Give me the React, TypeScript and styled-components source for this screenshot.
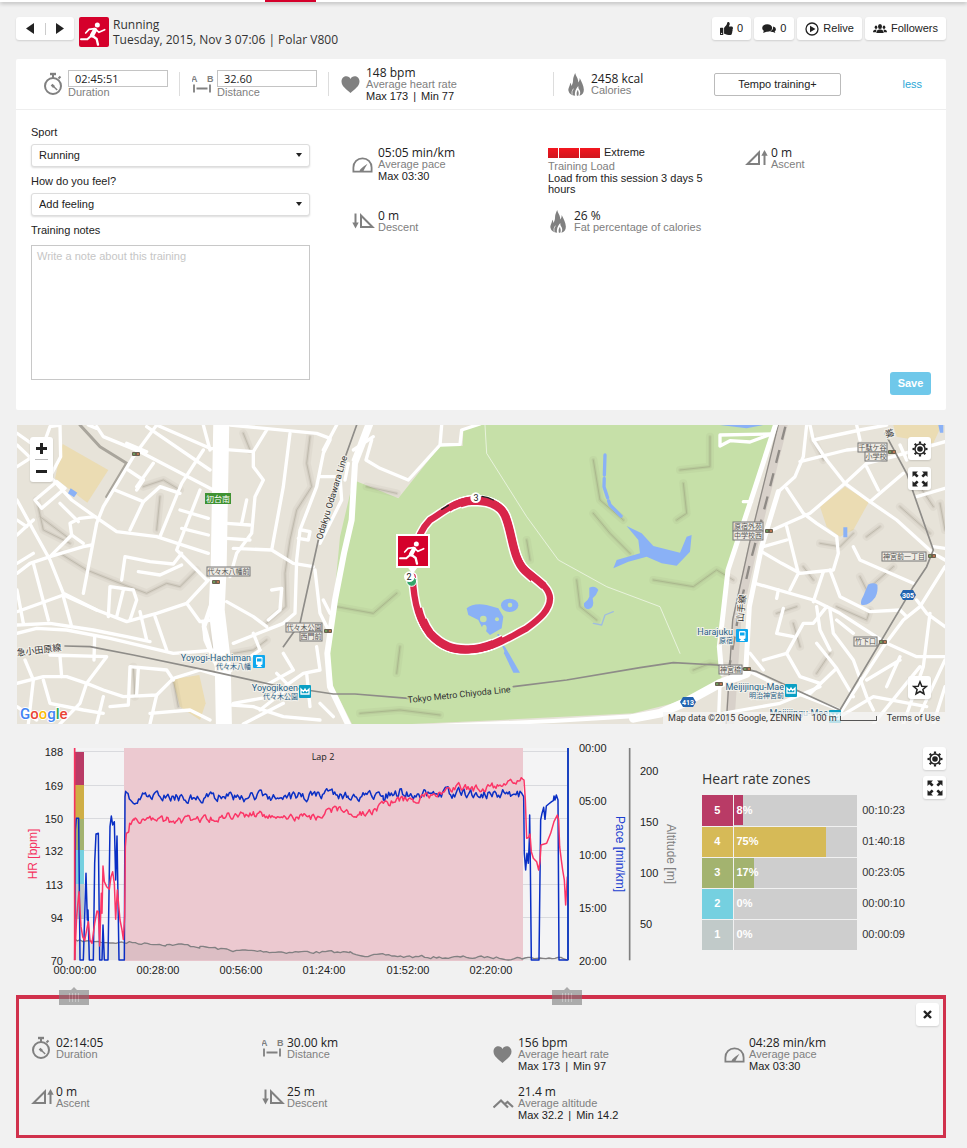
import React from "react";
import styled, { createGlobalStyle, css } from "styled-components";
import { FaThumbsUp } from "react-icons/fa";

const sans = `"Liberation Sans", Arial, sans-serif`;
const display = `"Open Sans", sans-serif`;
const mapFont = `Roboto, "Noto Sans CJK JP", sans-serif`;
const grey = "#808080";
const ink = "#222";
const pageBg = "#f1f1f1";

const GlobalStyle = createGlobalStyle`
  *, *::before, *::after { box-sizing: border-box; }
  body { margin: 0; background: ${pageBg}; color: ${ink}; font: 11px/13px ${sans}; }
  button, input, select, textarea { font: inherit; color: inherit; margin: 0; }
  button { cursor: pointer; }
`;

/* ---------- layout ---------- */

const TopBar = styled.div`
  height: 2px;
  background: #fff;
  box-shadow: 0 1px 4px rgba(0, 0, 0, 0.4);
  padding-left: 265px;
`;

const ActiveTab = styled.div`
  width: 51px;
  height: 2px;
  background: #d5002b;
`;

const Page = styled.main`
  padding: 15px 21px 10px 16px;
`;

const Header = styled.header`
  display: flex;
  align-items: flex-start;
  gap: 4px;
  margin-bottom: 12px;
`;

const whiteBox = css`
  border: 0;
  border-radius: 3px;
  background: #fff;
  box-shadow: 0 1px 2px rgba(0, 0, 0, 0.14);
`;

const NavPair = styled.nav`
  ${whiteBox}
  display: flex;
  align-items: center;
  height: 23px;
  width: 58px;
  margin-right: 1px;
`;

const NavButton = styled.button`
  flex: 1;
  height: 12px;
  padding: 0;
  border: 0;
  background: none;
  line-height: 0;
  & + & {
    border-left: 1px solid #ccc;
  }
`;

const Title = styled.h1`
  flex: 1;
  margin: 0;
  font: 400 12px/15px ${display};
  color: #333;
`;

const Actions = styled.div`
  display: flex;
  gap: 3px;
`;

const ActionButton = styled.button`
  ${whiteBox}
  display: flex;
  align-items: center;
  gap: 4px;
  height: 23px;
  padding: 0 8px;
`;

const IconButton = styled.button`
  ${whiteBox}
  display: grid;
  place-items: center;
  width: 23px;
  height: 23px;
  padding: 0;
`;

const Card = styled.section`
  background: #fff;
  border-radius: 2px;
  margin-bottom: 15px;
`;

const Summary = styled.div`
  display: grid;
  grid-template-columns: 163fr 149fr 225fr 137fr 256fr;
  height: 51px;
  border-bottom: 1px solid #eee;
`;

const SummaryCell = styled.div<{ $pad: number; $rule?: boolean }>`
  display: flex;
  align-items: center;
  padding-left: ${(p) => p.$pad}px;
  ${(p) =>
    p.$rule &&
    css`
      background: linear-gradient(#ddd, #ddd) 0 50% / 1px 24px no-repeat;
    `}
`;

const SummaryEnd = styled.div`
  display: flex;
  align-items: center;
  justify-content: space-between;
  padding: 0 24px;
`;

const SummaryInput = styled.input`
  display: block;
  width: 100px;
  height: 17px;
  padding: 0 6px;
  border: 1px solid #c4c4c4;
  background: #fff;
  font: 11px/13px ${display};
`;

const TargetButton = styled.button`
  width: 127px;
  height: 23px;
  border: 1px solid #bbb;
  border-radius: 2px;
  background: #fff;
`;

const LessLink = styled.a`
  color: #2aa7d6;
  text-decoration: none;
`;

const Details = styled.div`
  display: grid;
  grid-template-columns: 279fr 579fr;
  column-gap: 42px;
  padding: 15px 15px 0;
  min-height: 300px;
`;

const Form = styled.div`
  display: flex;
  flex-direction: column;
  padding-bottom: 30px;
`;

const FieldLabel = styled.label`
  line-height: 14px;
  margin-bottom: 5px;
`;

const SelectWrap = styled.div`
  position: relative;
  margin-bottom: 7px;
  &::after {
    content: "";
    position: absolute;
    right: 8px;
    top: 9px;
    border: 3px solid transparent;
    border-top: 4px solid #222;
    border-bottom: 0;
    pointer-events: none;
  }
`;

const Select = styled.select`
  appearance: none;
  display: block;
  width: 100%;
  height: 23px;
  padding: 0 7px;
  border: 1px solid #ddd;
  border-radius: 3px;
  background: #fff;
  box-shadow: 0 1px 2px rgba(0, 0, 0, 0.14);
`;

const Notes = styled.textarea`
  display: block;
  width: 100%;
  height: 135px;
  margin-top: 3px;
  padding: 4px 5px;
  border: 1px solid #c8c8c8;
  resize: none;
  &::placeholder {
    color: #c6c6c6;
    opacity: 1;
  }
`;

const MetricSide = styled.div`
  display: flex;
  flex-direction: column;
  justify-content: space-between;
  padding: 21px 0 15px;
`;

const IconSlot = styled.span`
  display: flex;
  flex: none;
  width: 25px;
`;

const MetricGrid = styled.div`
  display: grid;
  grid-template-columns: 196fr 197fr 186fr;
  grid-auto-rows: minmax(63px, auto);
  align-items: start;
  ${IconSlot} {
    width: 26px;
  }
`;

const MetricRow = styled.div`
  display: flex;
  align-items: center;
`;

const Value = styled.div`
  font: 12px/13px ${display};
`;

const Caption = styled.div`
  color: ${grey};
  line-height: 11px;
`;

const CaptionLabel = styled.label`
  display: block;
  color: ${grey};
  line-height: 11px;
`;

const Extra = styled.div`
  line-height: 13px;
`;

const Pipe = styled.span`
  padding: 0 5px;
`;

const Load = styled.div`
  max-width: 160px;
  line-height: 11px;
`;

const LoadLevel = styled.div`
  display: flex;
  align-items: center;
  height: 13px;
  margin-bottom: 2px;
  gap: 1px;
`;

const LoadBlock = styled.span<{ $half?: boolean }>`
  width: ${(p) => (p.$half ? 10 : 20)}px;
  height: 10px;
  background: linear-gradient(#f3161f, #cf161d);
`;

const LoadName = styled.span`
  margin-left: 3px;
`;

const LoadText = styled.div`
  margin-top: 1px;
`;

const SaveButton = styled.button`
  align-self: flex-end;
  width: 41px;
  height: 23px;
  padding: 0;
  border: 0;
  border-radius: 3px;
  background: #6fc8ea;
  color: #fff;
  font-weight: 700;
`;

const MapPanel = styled.section`
  position: relative;
  height: 299px;
  margin: 0 1px 14px;
  overflow: hidden;
`;

const MapSvg = styled.svg`
  display: block;
  width: 100%;
  height: 100%;
  text {
    font-family: ${mapFont};
  }
`;

const MapTools = styled.div<{ $side: "left" | "right" | "low" }>`
  position: absolute;
  display: flex;
  flex-direction: column;
  gap: 7px;
  ${(p) => p.$side === "left" && "left: 13px; top: 12px;"}
  ${(p) => p.$side === "right" && "right: 14px; top: 12px;"}
  ${(p) => p.$side === "low" && "right: 14px; bottom: 25px;"}
`;

const ZoomBox = styled.div`
  ${whiteBox}
  width: 23px;
  padding: 0 5px;
`;

const ZoomButton = styled.button`
  display: grid;
  place-items: center;
  width: 100%;
  height: 22px;
  padding: 0;
  border: 0;
  background: none;
  & + & {
    height: 23px;
    border-top: 1px solid #bbb;
  }
`;

const MapFooter = styled.div`
  position: absolute;
  right: 0;
  bottom: 0;
  display: flex;
  align-items: center;
  height: 12px;
  padding: 0 5px;
  gap: 10px;
  background: rgba(245, 245, 245, 0.75);
  font: 9px/12px ${mapFont};
  color: #333;
  white-space: nowrap;
  a {
    color: inherit;
    text-decoration: none;
  }
`;

const ScaleBar = styled.span`
  display: flex;
  align-items: center;
  gap: 3px;
  &::after {
    content: "";
    width: 37px;
    height: 5px;
    border: 1px solid #555;
    border-top: 0;
  }
`;

const ChartSection = styled.section`
  position: relative;
  z-index: 1;
  display: grid;
  grid-template-columns: minmax(0, 1fr) auto 24px;
  align-items: start;
`;

const ChartSvg = styled.svg`
  display: block;
  width: 100%;
  text {
    font: 11px ${sans};
    fill: ${ink};
  }
  text.axis {
    font-size: 12px;
  }
  text.hr {
    fill: #f5325f;
  }
  text.pace {
    fill: #1b3fd0;
  }
  text.altitude {
    fill: ${grey};
  }
  text.lap {
    font: 9px ${display};
  }
`;

const Zones = styled.div`
  padding: 33px 17px 0 12px;
`;

const ZoneTitle = styled.h2`
  margin: 0 0 8px;
  font: 400 14px/16px ${display};
  color: #333;
`;

const ZoneTable = styled.table`
  border-collapse: collapse;
  th,
  td {
    height: 31px;
    padding: 0;
    border-bottom: 1px solid ${pageBg};
  }
`;

const ZoneNumber = styled.th<{ $color: string }>`
  width: 31px;
  border-right: 1px solid ${pageBg};
  background: ${(p) => p.$color};
  color: #fff;
`;

const ZoneTrack = styled.td`
  width: 124px;
  background: #cecece;
`;

const ZoneFill = styled.div<{ $color: string }>`
  display: flex;
  align-items: center;
  height: 30px;
  padding-left: 3px;
  background: ${(p) => p.$color};
  color: #fff;
  font-weight: 700;
`;

const ZoneTime = styled.td`
  width: 48px;
  text-align: right;
  color: #333;
`;

const ChartTools = styled.div`
  display: flex;
  flex-direction: column;
  gap: 6px;
  padding: 9px 0 0 1px;
`;

const Selection = styled.section`
  position: relative;
  margin-top: -13px;
  padding: 37px 0 13px 12px;
  border: 3px solid #d0314c;
  border-top-width: 4px;
  display: grid;
  grid-template-columns: 231fr 231fr 231fr 219fr;
  grid-template-rows: 49px 37px;
  align-items: start;
`;

const CloseButton = styled(IconButton)`
  position: absolute;
  z-index: 2;
  right: 4px;
  top: 4px;
`;

/* ---------- icons ---------- */

const RunnerShape = () => (
  <g fill="none" stroke="#fff" strokeLinejoin="round" strokeLinecap="round">
    <circle cx="55" cy="24" r="7.5" fill="#fff" stroke="none" />
    <path d="M48 39L39 55" strokeWidth="13" />
    <path d="M50 37L60 46L77 38" strokeWidth="5" />
    <path d="M46 35L30 37L20 48" strokeWidth="5" />
    <path d="M41 57L53 66L57 83" strokeWidth="7" />
    <path d="M36 57L25 67L6 67" strokeWidth="6" />
  </g>
);

const SportIcon = () => (
  <svg width="30" height="30" viewBox="0 0 90 90" aria-label="Running">
    <rect width="90" height="90" rx="6" fill="#d5002b" />
    <RunnerShape />
  </svg>
);

const Stopwatch = () => (
  <svg width="20" height="24" viewBox="0 0 20 24" fill="none" stroke={grey} strokeWidth="2">
    <circle cx="10" cy="14" r="8" />
    <path d="M7 2H13" strokeWidth="2.4" />
    <path d="M10 2V6M15.5 6.5L17.5 4.5" />
    <path d="M9 13L14.2 18" strokeWidth="1.4" />
    <path d="M8.6 12.6L11 15" strokeWidth="2.6" />
  </svg>
);

const Distance = () => (
  <svg width="22" height="20" viewBox="0 0 22 20">
    <text x="-1" y="8" fontSize="9" fontWeight="700" fill={grey} fontFamily={sans}>
      A
    </text>
    <text x="15" y="8" fontSize="9" fontWeight="700" fill={grey} fontFamily={sans}>
      B
    </text>
    <path d="M2 10.500V18.500M18 10.500V18.500M4.500 14.500H15.500" stroke={grey} strokeWidth="1.8" />
  </svg>
);

const Heart = () => (
  <svg width="19" height="17" viewBox="0 0 19 17" fill={grey}>
    <path d="M9.500 17C6 13.500 0.500 10.500 0.500 5.500C0.500 2 3 0.300 5.300 0.300C7.300 0.300 8.800 1.400 9.500 3C10.200 1.400 11.700 0.300 13.700 0.300C16 0.300 18.500 2 18.500 5.500C18.500 10.500 13 13.500 9.500 17Z" />
  </svg>
);

const Flame = () => (
  <svg width="19" height="23" viewBox="-6 0 54 66" fill={grey}>
    <path d="M20 0C22 9 29 14 29 27C32 23 33 19 33 14C38 24 45 36 45 48C45 57 40 63 32 65C36 58 35 53 32 48C30 45 29 42 29 37C25 41 21 48 20 54C19 59 19 62 20 65C10 65 3 60 1 52C-1 44 5 38 6 28C8 30 9 33 9 37C13 32 14 26 14 20C14 12 18 6 20 0Z" />
    <path d="M25 65C23 58 25 52 28 48C29 54 32 58 29 65Z" />
    <path d="M12 62C9 56 12 50 15 45" fill="none" stroke="#fff" strokeWidth="2" />
  </svg>
);

const Gauge = () => (
  <svg width="21" height="16" viewBox="0 0 21 16" fill="none" stroke={grey} strokeWidth="1.8">
    <path d="M1.400 14.600V10.500C1.400 5 5.500 1.300 10.500 1.300S19.600 5 19.600 10.500V14.600Z" />
    <path d="M7.500 14.500C8 11.800 10.500 10.300 15.500 6.800C13 11 12 12.500 11.500 14.500Z" fill={grey} stroke="none" />
  </svg>
);

const Ascent = () => (
  <svg width="23" height="18" viewBox="0 0 23 18" fill="none" stroke={grey} strokeWidth="2" strokeMiterlimit="10">
    <path d="M2.500 15H14V3.500Z" />
    <path d="M19.500 16V5" />
    <path d="M16.300 6.800L19.500 1L22.700 6.800Z" fill={grey} stroke="none" />
  </svg>
);

const Descent = () => (
  <svg width="23" height="18" viewBox="0 0 23 18" fill="none" stroke={grey} strokeWidth="2" strokeMiterlimit="10">
    <path d="M9 3.500V15H20.500Z" />
    <path d="M3.500 1.500V12" />
    <path d="M0.300 10.500H6.700L3.500 16.500Z" fill={grey} stroke="none" />
  </svg>
);

const Mountain = () => (
  <svg width="21" height="11" viewBox="0 0 21 11" fill="none" stroke={grey} strokeWidth="2.200">
    <path d="M0.500 9.500L8 2.500L15 9.500M12 6L14.500 4L20 9" />
  </svg>
);

const Gear = () => (
  <svg width="16" height="16" viewBox="-8 -8 16 16" stroke={ink} fill="none">
    <circle r="5" strokeWidth="1.500" />
    <circle r="2.800" fill={ink} stroke="none" />
    {[0, 45, 90, 135, 180, 225, 270, 315].map((a) => (
      <path key={a} d="M0 -5.300V-7.500" strokeWidth="2.200" transform={`rotate(${a})`} />
    ))}
  </svg>
);

const Expand = () => (
  <svg width="16" height="16" viewBox="-8 -8 16 16" fill={ink}>
    {[0, 90, 180, 270].map((a) => (
      <path
        key={a}
        d="M2 -7.500H7.500V-2L5.800 -3.800L3.200 -1.400L1.400 -3.200L3.800 -5.800Z"
        transform={`rotate(${a})`}
      />
    ))}
  </svg>
);

const StarIcon = () => (
  <svg width="16" height="16" viewBox="0 0 16 16" fill="none" stroke={ink} strokeWidth="1.500">
    <path d="M8 1.800L9.800 6.200L14.300 6.500L10.900 9.500L12 14L8 11.500L4 14L5.100 9.500L1.700 6.500L6.200 6.200Z" />
  </svg>
);

const Comments = () => (
  <svg width="14" height="10" viewBox="0 0 14 10" fill={ink}>
    <ellipse cx="5.200" cy="4" rx="5" ry="3.800" />
    <path d="M2 6L1.200 9L5 7.500Z" />
    <path d="M11 2.500C14.500 3 14.500 6.500 12.700 7.300L13.300 9L11 8C9.800 8 8.600 7.700 8 7.200C10.500 6.500 11.400 4.800 11 2.500Z" />
  </svg>
);

const PlayRing = () => (
  <svg width="14" height="14" viewBox="0 0 14 14">
    <circle cx="7" cy="7" r="6" fill="none" stroke={ink} strokeWidth="1.300" />
    <path d="M5 3.800L10.500 7L5 10.200Z" fill={ink} />
  </svg>
);

const People = () => (
  <svg width="14" height="9" viewBox="0 0 14 9" fill={ink}>
    <ellipse cx="7" cy="2.500" rx="2" ry="2.500" />
    <path d="M3.300 9C3.300 6.500 4.500 6 6 5.500H8C9.500 6 10.700 6.500 10.700 9Z" />
    <ellipse cx="3" cy="3.300" rx="1.300" ry="1.800" />
    <ellipse cx="11" cy="3.300" rx="1.300" ry="1.800" />
    <path d="M0 8.300C0 6.300 1 5.800 3.500 5.500L2.800 8.300ZM14 8.300C14 6.300 13 5.800 10.500 5.500L11.200 8.300Z" />
  </svg>
);

const Triangle = ({ back }: { back?: boolean }) => (
  <svg width="8" height="11" viewBox="0 0 8 11" fill={ink}>
    <path d={back ? "M8 0V11L0 5.500Z" : "M0 0V11L8 5.500Z"} />
  </svg>
);

const Sign = ({ minus }: { minus?: boolean }) => (
  <svg width="11" height="11" viewBox="0 0 11 11" stroke={ink} strokeWidth="3">
    <path d={minus ? "M0 5.500H11" : "M0 5.500H11M5.500 0V11"} />
  </svg>
);

/* ---------- map ---------- */

const westRoads = [
  "M51 75L150 170L215 240L285 290L350 335L470 350L625 400",
  "M150 170L182 110L180 15M51 140L90 115M130 75L150 20L180 15M51 40L150 110",
  "M290 20L310 50L420 95L640 210M440 20L630 150M380 70L440 95M265 15L290 25",
  "M470 15L400 110L310 260L290 310L250 520M470 15L630 85L760 95",
  "M51 240L100 330L150 420L190 520L290 570L380 605L470 580L560 550L625 480",
  "M51 345L100 300M51 300L80 320M51 430L100 400M51 460L90 430L150 410L215 345",
  "M150 410L250 380L275 375M215 345L210 310L240 295L285 290M215 345L250 370",
  "M51 575L190 525L290 570M51 640L110 625L200 630L330 655L520 700L650 690",
  "M51 615L150 610L280 630L380 650L450 665M100 430L145 600M51 510L70 610",
  "M610 15L630 90M610 90L545 190L480 350M600 210L530 390L620 480",
  "M540 270L625 295M545 325L625 345M345 210L430 245L480 200L540 220",
  "M430 245L390 330M385 150L430 180L410 210M460 130L410 200",
  "M365 480L375 410L450 425L520 432L545 400M415 455L480 465L545 435",
  "M325 590L330 500L400 510L410 540L390 600M370 510L350 590M190 530L215 620",
  "M105 240L125 265L195 205L170 185L105 240M180 250L235 305M420 575L440 660M465 590L500 690",
  "M560 550L600 605L635 600M610 610L615 660L650 740",
  "M51 790L130 770L200 770L260 790L310 810L370 830L470 825L520 775L600 750L650 765",
  "M75 720L100 780L85 912M180 710L185 770M150 705L320 710L260 790L240 850L180 912",
  "M130 780L150 850L250 870L310 880M310 830L290 912M390 740L385 855L330 860M390 740L500 750L520 780",
  "M415 745L410 825M470 825L450 912M450 880L570 870L630 900M51 860L110 900M284 650L282 720",
  "M690 15L950 40L990 55M800 30L760 95L760 140L790 180L765 230L755 340L710 400L690 470",
  "M870 40L850 200L815 390M700 385L815 390L880 430L940 440M680 310L750 315M740 240L725 310M680 355L750 360",
  "M990 60L970 100L950 200L900 330L890 420L885 580L850 610L700 670M680 545L760 590L800 620M760 640L780 690",
  "M815 510L845 505L840 570L805 600M680 760L780 690M850 700L880 750L790 800M950 680L960 750L910 760L810 830L700 850",
  "M695 855L760 860L850 890L960 900M830 760L870 800L780 870M920 760L930 860M945 450L960 580L990 640M905 330L930 335L925 360L895 355",
  "M1010 15L970 90M960 170L1020 170L1025 240L960 370M970 540L990 580M960 850L1000 890M1100 15L1060 120M730 912L850 850",
];

const parkRoads = [
  "M155 60L138 120L180 145L265 180L360 75L420 73L425 30L480 12M360 75L365 15",
  "M100 90L160 50M75 180L85 130",
];

const eastRoads = [
  "M240 78L240 45L395 42M240 78L270 62L330 66L395 42M310 245L335 245",
  "M500 15L490 110L465 170L415 215M510 15L520 60L560 120L615 190L690 245L770 300L880 400",
  "M385 335L510 280L615 190L680 130L760 110L915 65M480 125L620 90L720 80M520 60L660 30L740 15M650 15L660 60",
  "M680 140L715 210M690 245L790 160M830 230L915 205M780 75L800 120",
  "M440 205L490 280L530 310L590 350L595 400L580 450L480 460L425 430L365 395M440 320L475 460L450 510M370 380L440 360",
  "M345 490L520 540L600 580L740 670L830 710L915 710M570 450L600 530L690 575L780 570L800 590M550 455L520 545",
  "M640 380L660 420L820 490M880 380L915 385M880 400L915 420M915 440L840 560L790 600L730 680L600 880",
  "M830 540L860 580L915 620M560 560L520 610L490 610L440 700L480 770L540 790M415 510L410 535",
  "M430 565L410 640L460 650M570 570L580 640L640 720L680 830L700 870M590 600L640 640M440 700L370 720M530 670L590 745L500 830M590 745L640 830",
  "M530 560L540 630L570 690M330 700L370 750M320 750L420 800L600 870M240 790L235 912M250 880L420 850L540 800",
  "M870 580L850 740L790 912M780 710L740 800M915 720L850 860L830 912M840 740L700 912M915 800L880 912M680 780L780 720M600 890L700 830L860 860",
];

const relief = [
  "M180 400L260 450L360 490L440 520L500 490L540 500L590 450",
  "M930 50L920 130L935 200L890 270L870 360L855 460L858 560L800 610",
  "M430 200L490 180L540 210M480 230L470 330M120 290L200 350M110 240L130 330L210 370",
  "M730 40L750 90M640 610L640 700M700 700L760 690L800 660M400 740L405 830M520 780L535 860",
  "M1100 200L1190 220M1010 560L1120 580L1190 520M1200 680L1190 760M1080 880L1200 870L1320 885",
  "M1780 120L1800 240L1870 300M1780 280L1830 340L1890 400M1730 480L1740 560L1790 600M1580 360L1590 420",
  "M2050 190L2060 280L2030 300M2130 50L2130 140L2040 150M1960 480L2080 500L2150 450L2200 480",
  "M2080 750L2130 730L2190 740M2600 350L2640 320M2510 560L2600 600L2610 570M2390 560L2330 580",
  "M2560 340L2520 380L2460 370M2440 60L2470 120M2700 260L2790 340M2820 250L2835 330M2490 700L2450 760",
  "M2410 440L2440 480M2580 470L2600 510L2680 440M2380 610L2400 680M2760 200L2800 260",
];

const route =
  "M278 470C282 560 300 610 330 640C365 680 400 692 445 690C520 688 570 650 620 625C660 595 690 570 690 535C688 500 650 480 620 455C580 420 578 350 560 300C550 260 520 240 465 238C410 240 370 275 330 300C305 325 290 360 282 400";
const routeMid =
  "M295 565C303 600 315 622 330 640C365 680 400 691 445 689C485 688 515 675 550 658M672 498C655 483 640 470 618 454C580 420 578 350 560 300C550 260 520 242 465 240C435 241 410 250 385 265";
const routeHeavy =
  "M308 600C314 615 321 628 330 640C365 678 400 690 445 688C475 688 500 680 520 672M640 474C632 467 625 461 615 452C580 420 578 350 560 300C550 262 520 244 465 242C450 242 435 245 420 250";

type SignProps = { x: number; y: number; w: number; children: string };
const MapSign = ({ x, y, w, children }: SignProps) => (
  <g>
    <rect x={x} y={y} width={w} height="9" fill="#eeebe4" stroke="#777" />
    <text x={x + w / 2} y={y + 7} fontSize="7" textAnchor="middle" fill="#555">
      {children}
    </text>
  </g>
);

const Signal = ({ x, y }: { x: number; y: number }) => (
  <g>
    <rect x={x - 4} y={y - 2} width="8" height="4" rx="1" fill="#6b6250" />
    <circle cx={x - 2} cy={y} r="1" fill="#6fae62" />
    <circle cx={x + 2} cy={y} r="1" fill="#d97b52" />
  </g>
);

const Train = ({ x, y, metro }: { x: number; y: number; metro?: boolean }) => (
  <g transform={`translate(${x} ${y})`}>
    <rect width="12" height="13" rx="1" fill={metro ? "#0b9fc4" : "#0fa8ee"} />
    {metro ? (
      <path d="M2 9V4L4.500 6.500L6 4L7.500 6.500L10 4V9Z" fill="none" stroke="#fff" strokeWidth="1.300" />
    ) : (
      <g fill="#fff">
        <rect x="3" y="2" width="6.500" height="8" rx="1.300" />
        <path d="M3.500 12L5 10H7.500L9 12Z" />
        <rect x="4" y="3.500" width="4.500" height="3" fill="#0fa8ee" />
      </g>
    )}
  </g>
);

const Shield = ({ x, y, children }: { x: number; y: number; children: string }) => (
  <g>
    <path d={`M${x - 8} ${y}L${x - 5} ${y - 5}H${x + 5}L${x + 8} ${y}L${x + 5} ${y + 5}H${x - 5}Z`} fill="#2264b0" />
    <text x={x} y={y + 3} fontSize="7" fontWeight="700" textAnchor="middle" fill="#fff">
      {children}
    </text>
  </g>
);

const MapDrawing = () => (
  <MapSvg viewBox="17 5 928 299" preserveAspectRatio="xMidYMid slice" role="img" aria-label="Route map">
    <rect x="0" width="967" height="320" fill="#e7e3d9" />
    <g transform="scale(.33333)" fill="none" strokeLinejoin="round" strokeLinecap="round">
      <g fill="#ebdcb3">
        <path d="M188 72L325 150L262 248L165 175Z" />
        <path d="M517 778L598 765L617 850L600 900L540 860Z" />
        <path d="M2460 260L2535 200L2607 245L2560 330L2520 350L2480 320Z" />
        <path d="M2680 15H2825L2800 70L2690 50Z" />
      </g>
      <path
        fill="#c6e0a8"
        d="M1060 180L1195 235L1320 78H1388L1390 30L1460 0H2330L2320 40L2250 260L2182 460L2157 690L2165 780L2020 850L1900 880L1500 900L1060 920L1000 800L985 720L1020 350Z"
      />
      <g stroke="#77705f" strokeWidth="24" opacity=".06">
        {relief.map((d) => (
          <path key={d} d={d} />
        ))}
      </g>
      <g stroke="#77705f" strokeWidth="10" opacity=".1">
        {relief.map((d) => (
          <path key={d} d={d} />
        ))}
      </g>
      <g stroke="#77705f" strokeWidth="3" opacity=".22">
        {relief.map((d) => (
          <path key={d} d={d} />
        ))}
      </g>
      <path d="M240 15L300 80L380 130L320 230" stroke="#a9a59c" strokeWidth="9" />
      <g stroke="#fff" strokeWidth="10">
        {westRoads.map((d) => (
          <path key={d} d={d} />
        ))}
        <g transform="translate(960 0)">
          {parkRoads.map((d) => (
            <path key={d} d={d} />
          ))}
          <path strokeWidth="18" d="M150 15L105 130L95 300L72 400L45 540L22 700L30 800L90 925" />
          <path strokeWidth="3" opacity=".6" d="M495 15L500 100L620 290L715 420L860 500L1020 560L1080 700" />
          <path strokeWidth="12" d="M340 918L700 903L1000 885" />
        </g>
        <g transform="translate(1920 0)">
          <path stroke="#d8d1ca" strokeWidth="28" d="M430 10L345 350L290 600L268 925" />
          <path stroke="#8f8b86" strokeWidth="4" d="M416 10L335 340L278 600L258 925" />
          <path stroke="#8f8b86" strokeWidth="7" strokeDasharray="40 32" strokeLinecap="butt" d="M436 20L380 240L330 430L300 560L268 740" />
          {eastRoads.map((d) => (
            <path key={d} d={d} />
          ))}
          <path strokeWidth="15" d="M408 10L330 250L264 450L238 680L245 760M415 215L365 380L328 560L318 740" />
          <path strokeWidth="26" d="M-20 895L60 880L140 845L240 790L320 760" />
        </g>
        <path strokeWidth="48" d="M664 0L656 440L650 570L668 720L672 930" />
        <path strokeWidth="14" d="M632 560L612 620L640 720" />
      </g>
      <g stroke="#8e8c88" strokeWidth="5">
        <path d="M195 678L270 680L400 705L640 755L820 795L1000 822L1065 822L1225 835M1540 800L1700 780L1920 743L2020 728L2150 735L2240 748L2270 755L2400 815L2520 870" />
        <path d="M1070 15L1036 110M955 360L900 610L850 680M2655 40L2720 160L2800 390L2780 440L2740 500L2520 870" />
      </g>
      <g fill="#8ab1f6">
        <path d="M212 205L232 218L222 232L204 220Z" />
        <path d="M1880 318L1925 340L1960 378L2040 398L2060 350L2075 345L2070 395L2030 437L1985 430L1940 410L1885 425L1840 445L1850 420L1920 400L1915 360Z" />
        <path d="M1400 565Q1420 548 1460 555L1495 565L1510 590L1505 625L1470 645L1445 620L1435 600L1405 585Z" />
        <ellipse cx="1529" cy="556" rx="26" ry="20" />
        <path d="M1515 680L1560 758H1540L1512 700Z" />
        <path d="M1768 503Q1785 495 1795 510Q1790 525 1778 535Q1785 565 1765 568Q1750 566 1752 550Q1765 540 1768 530Z" />
        <path d="M2604 494Q2620 486 2632 494Q2635 515 2626 532Q2605 560 2584 554Q2580 545 2590 528Z" />
        <path d="M2530 322H2542V352H2530ZM2160 15H2290L2240 25Z" />
        <path d="M2815 15H2830V38H2820Z" />
      </g>
      <g fill="#c6e0a8">
        <circle cx="1530" cy="555" r="7" />
        <circle cx="1450" cy="597" r="10" />
        <circle cx="1491" cy="598" r="6" />
        <ellipse cx="1453" cy="625" rx="7" ry="11" />
      </g>
      <path stroke="#8ab1f6" strokeWidth="10" strokeDasharray="60 10" d="M1815 105L1812 200L1830 255L1865 290" />
      <path stroke="#8ab1f6" strokeWidth="6" strokeDasharray="20 8" d="M1495 645L1515 690" />
      <path stroke="#9fbce0" strokeWidth="4" d="M1780 610L1805 615L1815 585L1840 575" />
      <g transform="translate(960 0)">
        <path d={route} stroke="#fff" strokeWidth="28" />
        <path d={routeMid} stroke="#fff" strokeWidth="31" strokeLinecap="butt" />
        <path d={routeHeavy} stroke="#fff" strokeWidth="34" strokeLinecap="butt" />
        <path d={route} stroke="#d8254a" strokeWidth="19" />
        <path d={routeMid} stroke="#d8254a" strokeWidth="22" strokeLinecap="butt" />
        <path d={routeHeavy} stroke="#d8254a" strokeWidth="25" strokeLinecap="butt" />
        <path d="M486 229Q505 231 520 240M365 268L385 256" stroke="#222" strokeWidth="4" />
        <circle cx="275" cy="484" r="15" fill="#35a56a" stroke="#fff" strokeWidth="3" />
        <circle cx="467" cy="233" r="16" fill="#fff" />
        <path d="M262 440H294L278 462Z" fill="#fff" />
        <circle cx="268" cy="470" r="16" fill="#fff" />
        <rect x="228" y="342" width="102" height="102" fill="#fff" />
        <rect x="234" y="348" width="90" height="90" fill="#d5002b" />
        <g transform="translate(234 348)">
          <RunnerShape />
        </g>
      </g>
    </g>
    <text x="476" y="81" fontSize="9" textAnchor="middle" fill={ink}>3</text>
    <text x="409" y="160" fontSize="9" textAnchor="middle" fill={ink}>2</text>

    <rect x="205" y="73" width="26" height="11" fill="#3f9233" />
    <text x="218" y="82" fontSize="8" textAnchor="middle" fill="#fff">初台南</text>
    <MapSign x={207} y={147} w={43}>代々木八幡前</MapSign>
    <MapSign x={286} y={203} w={36}>代々木公園</MapSign>
    <MapSign x={300} y={212} w={22}>西門前</MapSign>
    <MapSign x={858} y={23} w={29}>千駄ケ谷</MapSign>
    <MapSign x={865} y={32} w={22}>小学校</MapSign>
    <MapSign x={733} y={102} w={30}>原宿外苑</MapSign>
    <MapSign x={733} y={111} w={30}>中学校西</MapSign>
    <MapSign x={882} y={132} w={44}>神宮前一丁目</MapSign>
    <MapSign x={854} y={217} w={23}>竹下口</MapSign>
    <MapSign x={719} y={245} w={23}>神宮橋</MapSign>
    <Signal x={136} y={34} />
    <Signal x={216} y={162} />
    <Signal x={328} y={211} />
    <Signal x={892} y={32} />
    <Signal x={769} y={111} />
    <Signal x={932} y={136} />
    <Signal x={883} y={222} />
    <Signal x={747} y={249} />
    <Signal x={719} y={264} />
    <g fill="#285f87" stroke="#f3f1ea" strokeWidth="2" paintOrder="stroke" textAnchor="end" fontSize="9">
      <text x="251" y="241">Yoyogi-Hachiman</text>
      <text x="251" y="249" fontSize="7">代々木八幡</text>
      <text x="298" y="271">Yoyogikoen</text>
      <text x="298" y="279" fontSize="7">代々木公園</text>
      <text x="733" y="215">Harajuku</text>
      <text x="733" y="223" fontSize="7">原宿</text>
      <text x="784" y="270">Meijijingu-Mae</text>
      <text x="784" y="278" fontSize="7">明治神宮前</text>
      <text x="828" y="296">Meijijingu-Mae</text>
    </g>
    <Train x={253} y={235} />
    <Train x={299} y={265} metro />
    <Train x={736} y={209} />
    <Train x={785} y={264} metro />
    <Train x={829} y={290} metro />
    <Shield x={908} y={175}>305</Shield>
    <Shield x={688} y={282}>413</Shield>
    <g fill="#333" stroke="#f3f1ea" strokeWidth="2" paintOrder="stroke" fontSize="9">
      <text transform="translate(17 236) rotate(-7)">急小田原線</text>
      <text transform="translate(322 120) rotate(-73)">Odakyu Odawara Line</text>
      <text transform="translate(408 283) rotate(-6)" stroke="#c6e0a8">Tokyo Metro Chiyoda Line</text>
      <text transform="translate(743 202) rotate(-84)">山手線</text>
      <text transform="translate(885 10) rotate(72)">線</text>
    </g>
    <text x="20" y="299" fontSize="15" fontWeight="500" stroke="#fff" strokeWidth="2" paintOrder="stroke">
      <tspan fill="#4285f4">G</tspan>
      <tspan fill="#ea4335">o</tspan>
      <tspan fill="#fbbc05">o</tspan>
      <tspan fill="#4285f4">g</tspan>
      <tspan fill="#34a853">l</tspan>
      <tspan fill="#ea4335">e</tspan>
    </text>
  </MapSvg>
);

/* ---------- training curves ---------- */

type Point = [number, number];

const makeRandom = (seed: number) => () => {
  seed = (seed * 16807) % 2147483647;
  return seed / 2147483647;
};

function trace(keys: Point[], step: number, spread: number, seed: number): string {
  const random = makeRandom(seed);
  const out: string[] = [];
  let drift = 0;
  for (let i = 0; i < keys.length - 1; i++) {
    const [x0, y0] = keys[i];
    const [x1, y1] = keys[i + 1];
    for (let x = x0; x < x1; x += step) {
      drift = drift * 0.55 + (random() - 0.5) * spread;
      out.push(`L${x} ${Math.round(y0 + ((y1 - y0) * (x - x0)) / (x1 - x0) + drift)}`);
    }
  }
  return out.join("");
}

const paceCurve =
  "M224 690L226 300L229 265L236 265L240 690L250 690L258 430L262 570L264 540L268 690L280 690L284 400L288 312L295 310L299 690L306 690L309 585L313 690L324 690L330 290L334 258L338 285L343 275L347 450L351 318L357 690L373 690L375 200L377 184" +
  trace([[380, 200], [700, 201], [900, 200], [1045, 194], [1150, 195], [1200, 190], [1566, 191]], 4, 25, 41) +
  "L1571 200L1573 370L1577 420L1581 370L1585 400L1588 330L1589 255L1591 400L1594 690L1617 690L1622 270L1626 250L1631 232L1635 268L1639 228L1646 222L1655 215L1660 212L1662 198L1665 210L1669 195L1674 210L1677 690L1704 690";

const heartCurve =
  "M224 690L230 560L237 485L243 590L248 620L254 632L260 600L265 575L270 630L276 640L284 580L291 543L295 545L299 648L304 490L306 550L309 408L313 455L320 470L328 478L333 440L338 425L343 460L347 568L352 480L360 570L366 600L370 628L374 560L376 350L379 310L386 306" +
  trace(
    [[389, 290], [402, 268], [500, 274], [560, 272], [600, 272], [650, 260], [760, 255], [950, 262], [1000, 240], [1045, 240], [1080, 250], [1130, 240], [1150, 218], [1240, 205], [1300, 188], [1360, 173], [1420, 178], [1520, 165], [1540, 150], [1570, 150]],
    4,
    20,
    97
  ) +
  "L1572 150L1576 210L1580 325L1586 322L1590 312L1594 365L1600 385L1610 395L1616 420L1620 395L1623 345L1640 340L1652 310L1662 275L1672 255L1676 270L1679 350L1684 390L1688 420L1693 450L1697 525L1702 440";

const altitudeCurve =
  "M224 626L232 633" +
  trace([[240, 634], [370, 637], [500, 642], [600, 650], [700, 662], [850, 665], [1050, 668], [1130, 677], [1300, 682], [1566, 683], [1704, 685]], 9, 8, 7);

const bpmTicks: [string, number][] = [
  ["188", 22], ["169", 56], ["150", 89], ["132", 121], ["113", 155], ["94", 188], ["70", 231],
];
const timeTicks: [string, number][] = [
  ["00:00:00", 75], ["00:28:00", 158], ["00:56:00", 241], ["01:24:00", 324], ["01:52:00", 408], ["02:20:00", 491],
];
const paceTicks: [string, number][] = [
  ["00:00", 18], ["05:00", 71], ["10:00", 125], ["15:00", 178], ["20:00", 231],
];
const altTicks: [string, number][] = [["200", 41], ["150", 92], ["100", 143], ["50", 194]];

const zoneStrip: [string, number, number][] = [
  ["#b93b66", 22, 33], ["#cfae45", 55, 34], ["#a3b36f", 89, 31], ["#75d0e0", 120, 34], ["#c1cac9", 154, 35],
];

const Handle = ({ x }: { x: number }) => (
  <g transform={`translate(${x} 257)`} opacity=".6">
    <path d="M-15 3H-3L0 0L3 3H15V18H-15Z" fill="#7d7d7d" />
    <path d="M-4.500 6V15M-1.500 6V15M1.500 6V15M4.500 6V15" stroke="#aaa" />
  </g>
);

const Chart = () => (
  <ChartSvg viewBox="16 8 674 270" role="img" aria-label="Heart rate, pace and altitude">
    <rect x="75" y="18" width="494" height="213" fill="#f4f4f5" />
    {bpmTicks.slice(0, 6).map(([t, y]) => (
      <path key={t} d={`M75 ${y - 0.5}H568`} stroke="#d9dade" />
    ))}
    {zoneStrip.map(([c, y, h]) => (
      <rect key={c} x="75" y={y} width="9" height={h} fill={c} />
    ))}
    <rect x="124" y="18" width="399" height="213" fill="#ecc9d0" />
    <g transform="scale(.33333)" fill="none" strokeLinejoin="round">
      <path d={`${altitudeCurve}L1704 691L224 691Z`} fill="#777" opacity=".13" />
      <path d={altitudeCurve} stroke="#828082" strokeWidth="4" />
      <path d={paceCurve} stroke="#0a2fc4" strokeWidth="4.500" />
      <path d={heartCurve} stroke="#fb3566" strokeWidth="4.500" />
      <path d="M224 54V691" stroke="#f5325f" strokeWidth="5" />
      <path d="M1704 54V691" stroke="#1b43c0" strokeWidth="6" />
      <path d="M1889 54V691" stroke="#808080" strokeWidth="5" />
    </g>
    <text className="lap" x="323" y="30" textAnchor="middle">Lap 2</text>
    {bpmTicks.map(([t, y]) => (
      <text key={t} x="63" y={y + 4} textAnchor="end">{t}</text>
    ))}
    {timeTicks.map(([t, x]) => (
      <text key={t} x={x} y="244" textAnchor="middle">{t}</text>
    ))}
    {paceTicks.map(([t, y]) => (
      <text key={t} x="579" y={y + 4}>{t}</text>
    ))}
    {altTicks.map(([t, y]) => (
      <text key={t} x="640" y={y + 4}>{t}</text>
    ))}
    <g textAnchor="middle">
      <text className="axis hr" transform="translate(37 124) rotate(-90)">HR [bpm]</text>
      <text className="axis pace" transform="translate(616 124) rotate(90)">Pace [min/km]</text>
      <text className="axis altitude" transform="translate(667 124) rotate(90)">Altitude [m]</text>
    </g>
    <Handle x={74} />
    <Handle x={567} />
  </ChartSvg>
);

/* ---------- page ---------- */

type MetricProps = {
  icon: React.ReactNode;
  value: string;
  label: string;
  max?: string;
  min?: string;
};

const Metric = ({ icon, value, label, max, min }: MetricProps) => (
  <MetricRow>
    <IconSlot>{icon}</IconSlot>
    <div>
      <Value>{value}</Value>
      <Caption>{label}</Caption>
      {max && (
        <Extra>
          Max {max}
          {min && (
            <>
              <Pipe>|</Pipe>Min {min}
            </>
          )}
        </Extra>
      )}
    </div>
  </MetricRow>
);

const zones = [
  { n: 5, color: "#b93b66", percent: 8, time: "00:10:23" },
  { n: 4, color: "#d6ba57", percent: 75, time: "01:40:18" },
  { n: 3, color: "#a3b36f", percent: 17, time: "00:23:05" },
  { n: 2, color: "#75d0e0", percent: 0, time: "00:00:10" },
  { n: 1, color: "#c1cac9", percent: 0, time: "00:00:09" },
];

export default function App() {
  return (
    <>
      <GlobalStyle />
      <TopBar>
        <ActiveTab />
      </TopBar>
      <Page>
        <Header>
          <NavPair aria-label="Training sessions">
            <NavButton aria-label="Previous"><Triangle back /></NavButton>
            <NavButton aria-label="Next"><Triangle /></NavButton>
          </NavPair>
          <SportIcon />
          <Title>
            Running
            <br />
            Tuesday, 2015, Nov 3 07:06 | Polar V800
          </Title>
          <Actions>
            <ActionButton aria-label="Likes"><FaThumbsUp size={13} />0</ActionButton>
            <ActionButton aria-label="Comments"><Comments />0</ActionButton>
            <ActionButton><PlayRing />Relive</ActionButton>
            <ActionButton><People />Followers</ActionButton>
          </Actions>
        </Header>

        <Card>
          <Summary>
            <SummaryCell $pad={27}>
              <IconSlot><Stopwatch /></IconSlot>
              <div>
                <SummaryInput id="duration" defaultValue="02:45:51" />
                <CaptionLabel htmlFor="duration">Duration</CaptionLabel>
              </div>
            </SummaryCell>
            <SummaryCell $pad={13} $rule>
              <IconSlot><Distance /></IconSlot>
              <div>
                <SummaryInput id="distance" defaultValue="32.60" />
                <CaptionLabel htmlFor="distance">Distance</CaptionLabel>
              </div>
            </SummaryCell>
            <SummaryCell $pad={13} $rule>
              <Metric icon={<Heart />} value="148 bpm" label="Average heart rate" max="173" min="77" />
            </SummaryCell>
            <SummaryCell $pad={13} $rule>
              <Metric icon={<Flame />} value="2458 kcal" label="Calories" />
            </SummaryCell>
            <SummaryEnd>
              <TargetButton>Tempo training+</TargetButton>
              <LessLink href="#less">less</LessLink>
            </SummaryEnd>
          </Summary>

          <Details>
            <Form>
              <FieldLabel htmlFor="sport">Sport</FieldLabel>
              <SelectWrap>
                <Select id="sport"><option>Running</option></Select>
              </SelectWrap>
              <FieldLabel htmlFor="feeling">How do you feel?</FieldLabel>
              <SelectWrap>
                <Select id="feeling"><option>Add feeling</option></Select>
              </SelectWrap>
              <FieldLabel htmlFor="notes">Training notes</FieldLabel>
              <Notes id="notes" placeholder="Write a note about this training" />
            </Form>
            <MetricSide>
              <MetricGrid>
                <Metric icon={<Gauge />} value="05:05 min/km" label="Average pace" max="03:30" />
                <Load>
                  <LoadLevel>
                    <LoadBlock $half />
                    <LoadBlock />
                    <LoadBlock />
                    <LoadName>Extreme</LoadName>
                  </LoadLevel>
                  <Caption>Training Load</Caption>
                  <LoadText>Load from this session 3 days 5 hours</LoadText>
                </Load>
                <Metric icon={<Ascent />} value="0 m" label="Ascent" />
                <Metric icon={<Descent />} value="0 m" label="Descent" />
                <Metric icon={<Flame />} value="26 %" label="Fat percentage of calories" />
              </MetricGrid>
              <SaveButton>Save</SaveButton>
            </MetricSide>
          </Details>
        </Card>

        <MapPanel>
          <MapDrawing />
          <MapTools $side="left">
            <ZoomBox>
              <ZoomButton aria-label="Zoom in"><Sign /></ZoomButton>
              <ZoomButton aria-label="Zoom out"><Sign minus /></ZoomButton>
            </ZoomBox>
          </MapTools>
          <MapTools $side="right">
            <IconButton aria-label="Map settings"><Gear /></IconButton>
            <IconButton aria-label="Full screen map"><Expand /></IconButton>
          </MapTools>
          <MapTools $side="low">
            <IconButton aria-label="Add to favourites"><StarIcon /></IconButton>
          </MapTools>
          <MapFooter>
            <span>Map data ©2015 Google, ZENRIN</span>
            <ScaleBar>100 m</ScaleBar>
            <a href="#terms">Terms of Use</a>
          </MapFooter>
        </MapPanel>

        <ChartSection>
          <Chart />
          <Zones>
            <ZoneTitle>Heart rate zones</ZoneTitle>
            <ZoneTable>
              <tbody>
                {zones.map((z) => (
                  <tr key={z.n}>
                    <ZoneNumber scope="row" $color={z.color}>{z.n}</ZoneNumber>
                    <ZoneTrack>
                      <ZoneFill $color={z.percent ? z.color : "transparent"} style={{ width: `${z.percent}%` }}>
                        {z.percent}%
                      </ZoneFill>
                    </ZoneTrack>
                    <ZoneTime>{z.time}</ZoneTime>
                  </tr>
                ))}
              </tbody>
            </ZoneTable>
          </Zones>
          <ChartTools>
            <IconButton aria-label="Chart settings"><Gear /></IconButton>
            <IconButton aria-label="Full screen chart"><Expand /></IconButton>
          </ChartTools>
        </ChartSection>

        <Selection>
          <CloseButton aria-label="Close">
            <svg width="9" height="9" viewBox="0 0 9 9" stroke={ink} strokeWidth="2.400">
              <path d="M1 1L8 8M8 1L1 8" />
            </svg>
          </CloseButton>
          <Metric icon={<Stopwatch />} value="02:14:05" label="Duration" />
          <Metric icon={<Distance />} value="30.00 km" label="Distance" />
          <Metric icon={<Heart />} value="156 bpm" label="Average heart rate" max="173" min="97" />
          <Metric icon={<Gauge />} value="04:28 min/km" label="Average pace" max="03:30" />
          <Metric icon={<Ascent />} value="0 m" label="Ascent" />
          <Metric icon={<Descent />} value="25 m" label="Descent" />
          <Metric icon={<Mountain />} value="21.4 m" label="Average altitude" max="32.2" min="14.2" />
        </Selection>
      </Page>
    </>
  );
}
